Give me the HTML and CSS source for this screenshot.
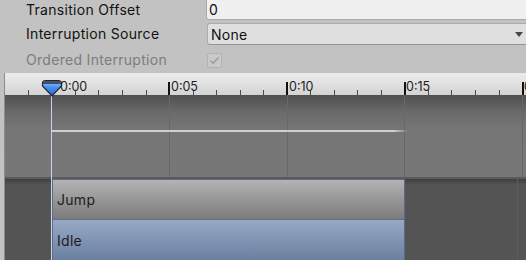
FILE: index.html
```html
<!DOCTYPE html>
<html>
<head>
<meta charset="utf-8">
<link rel="stylesheet" href="styles.css">
</head>
<body>
<div class="inspector">
  <div class="row row-offset">
    <span class="label">Transition Offset</span>
    <div class="field text-field">0</div>
  </div>
  <div class="row row-source">
    <span class="label">Interruption Source</span>
    <div class="field dropdown"><span>None</span><span class="arrow"></span></div>
  </div>
  <div class="row row-ordered">
    <span class="label disabled">Ordered Interruption</span>
    <span class="checkbox">
      <svg width="11" height="9" viewBox="0 0 11 9"><polyline points="1.5,4.5 4.2,7.2 9.5,1.5" fill="none" stroke="#9b9b9b" stroke-width="1.4"/></svg>
    </span>
  </div>
</div>
<div class="timeline">
  <div class="ruler">
    <span class="tick minor" style="left:23px"></span>
    <span class="tick minor" style="left:70px"></span>
    <span class="tick minor" style="left:93px"></span>
    <span class="tick minor" style="left:117px"></span>
    <span class="tick minor" style="left:141px"></span>
    <span class="tick minor" style="left:188px"></span>
    <span class="tick minor" style="left:211px"></span>
    <span class="tick minor" style="left:235px"></span>
    <span class="tick minor" style="left:258px"></span>
    <span class="tick minor" style="left:305px"></span>
    <span class="tick minor" style="left:329px"></span>
    <span class="tick minor" style="left:352px"></span>
    <span class="tick minor" style="left:376px"></span>
    <span class="tick minor" style="left:423px"></span>
    <span class="tick minor" style="left:446px"></span>
    <span class="tick minor" style="left:470px"></span>
    <span class="tick minor" style="left:494px"></span>
    <span class="tick major" style="left:46px"></span>
    <span class="tick major" style="left:163px"></span>
    <span class="tick major" style="left:281px"></span>
    <span class="tick major" style="left:399px"></span>
    <span class="tick major" style="left:517px"></span>
    <span class="time" style="left:55px">0:00</span>
    <span class="time" style="left:166px">0:05</span>
    <span class="time" style="left:284px">0:10</span>
    <span class="time" style="left:401px">0:15</span>
    <span class="time" style="left:519px">0:20</span>
  </div>
  <div class="track-area">
    <span class="gridline" style="left:164px"></span>
    <span class="gridline" style="left:282px"></span>
    <span class="gridline" style="left:399px"></span>
    <span class="gridline" style="left:517px"></span>
    <span class="curve"></span>
  </div>
  <div class="clips">
    <div class="clip-gap"></div>
    <div class="clip-column">
      <div class="clip clip-jump">Jump</div>
      <div class="clip clip-idle">Idle</div>
    </div>
    <div class="clip-rest"><span class="gridline low"></span></div>
  </div>
  <div class="playhead-line"></div>
  <svg class="playhead" width="22" height="18" viewBox="0 0 22 18">
    <defs>
      <linearGradient id="ph" x1="0" y1="0" x2="0" y2="1">
        <stop offset="0" stop-color="#9ccaff"/>
        <stop offset="0.45" stop-color="#4690f0"/>
        <stop offset="1" stop-color="#2766cc"/>
      </linearGradient>
    </defs>
    <path d="M1.5,4.5 Q1.5,1.5 4.5,1.5 L17.5,1.5 Q20.5,1.5 20.5,4.5 L20.5,7 L11,17 L1.5,7 Z" fill="url(#ph)" stroke="#262626" stroke-width="1.2"/>
    <path d="M2,4.5 Q2,2 4.5,2 L17.5,2 Q20,2 20,4.5 L20,5 L2,5 Z" fill="#2a2f3a" opacity="0.75"/>
  </svg>
</div>
</body>
</html>
```
FILE: styles.css
```css
html, body {
  margin: 0;
  padding: 0;
}
body {
  width: 526px;
  height: 260px;
  overflow: hidden;
  background: #c2c2c2;
  font-family: Inter, "Noto Sans", sans-serif;
  font-size: 14px;
  letter-spacing: 0.3px;
  color: #111;
}
.inspector {
  padding: 0 0 2px 26px;
  height: 71px;
}
.row {
  display: flex;
  align-items: center;
}
.label {
  flex: none;
  width: 180px;
  line-height: 20px;
  white-space: nowrap;
  color: #121212;
}
.label.disabled {
  color: #7d7d7d;
}
.row-offset {
  height: 20px;
}
.row-source {
  height: 22px;
  margin-top: 3px;
}
.row-ordered {
  height: 22px;
  margin-top: 4px;
}
.field {
  flex: 1;
  box-sizing: border-box;
  margin-right: -12px;
  border-radius: 3px;
  display: flex;
  align-items: center;
}
.text-field {
  align-self: stretch;
  margin-top: -4px;
  height: 24px;
  background: #f0f0f0;
  border: 1px solid #a9a9a9;
  padding: 3px 0 0 2px;
}
.dropdown {
  height: 22px;
  margin-left: 1px;
  background: #dfdfdf;
  border: 1px solid #ababab;
  border-bottom-color: #949494;
  padding-left: 3px;
  justify-content: space-between;
}
.arrow {
  width: 0;
  height: 0;
  border-top: 5px solid #474747;
  border-left: 4.5px solid transparent;
  border-right: 4.5px solid transparent;
  margin-right: 14px;
}
.checkbox {
  width: 15px;
  height: 15px;
  box-sizing: border-box;
  margin-left: 1px;
  border: 1px solid #b3b3b3;
  border-radius: 2px;
  background: #c9c9c9;
  display: flex;
  align-items: center;
  justify-content: center;
}
.timeline {
  position: relative;
  margin-left: 4px;
  border-left: 1px solid #8c8c8c;
  height: 187px;
  overflow: hidden;
}
.ruler {
  position: relative;
  height: 22px;
  background: linear-gradient(#ececec, #d3d3d3);
  border-top: 1px solid #e9e9e9;
  box-sizing: border-box;
}
.tick {
  position: absolute;
  bottom: 0;
}
.tick.minor {
  width: 1px;
  height: 5px;
  background: #4a4a4a;
}
.tick.major {
  width: 2px;
  height: 13px;
  background: #111;
}
.time {
  position: absolute;
  top: 6px;
  font-size: 12.5px;
  letter-spacing: 0;
  line-height: 14px;
  color: #1c1c1c;
}
.track-area {
  position: relative;
  height: 82px;
  background: linear-gradient(#4f4f4f 0, #6b6b6b 18px, #767676 34px, #777 100%);
  border-bottom: 2px solid #5a5a5a;
}
.gridline {
  position: absolute;
  top: 0;
  bottom: 0;
  width: 1px;
  background: #686868;
}
.gridline.low {
  left: 112px;
  background: #5c5c5c;
}
.curve {
  position: absolute;
  left: 47px;
  top: 35px;
  width: 356px;
  height: 2px;
  background: linear-gradient(to right, #cfcfcf 96%, rgba(207,207,207,0));
}
.clips {
  display: flex;
  height: 81px;
}
.clip-gap,
.clip-rest {
  background: linear-gradient(#3f3f3f 0, #545454 6px, #545454 100%);
}
.clip-gap {
  width: 47px;
  flex: none;
}
.clip-rest {
  position: relative;
  flex: 1;
}
.clip-column {
  width: 353px;
  flex: none;
  display: flex;
  flex-direction: column;
}
.clip {
  box-sizing: border-box;
  border-left: 1px solid #5b6b88;
  border-right: 1px solid #5b6b88;
  padding-left: 4px;
  display: flex;
  align-items: center;
  color: #1d1d1d;
  font-size: 14px;
}
.clip-jump {
  height: 41px;
  border-top: 1px solid #5d6a80;
  border-bottom: 1px solid #5f6f8c;
  background: linear-gradient(#b3b3b3, #7b7b7b);
}
.clip-idle {
  height: 40px;
  background: linear-gradient(#97a9c3, #6b80a1);
}
.playhead-line {
  position: absolute;
  left: 46px;
  top: 22px;
  bottom: 0;
  width: 1px;
  background: #c7d4ee;
}
.playhead {
  position: absolute;
  left: 36px;
  top: 6px;
}
```
